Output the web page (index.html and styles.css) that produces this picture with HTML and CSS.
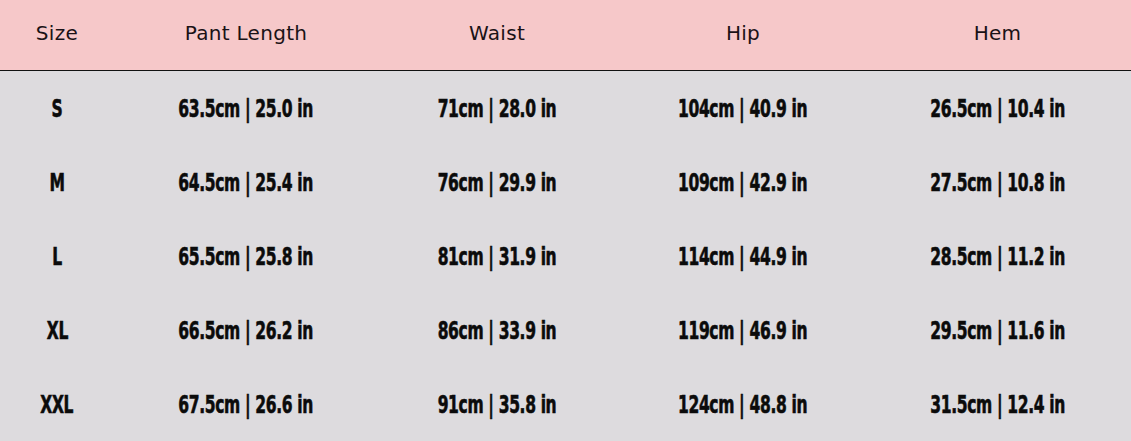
FILE: index.html
```html
<!DOCTYPE html>
<html>
<head>
<meta charset="utf-8">
<link rel="stylesheet" href="styles.css">
</head>
<body>
<div class="chart">
  <div class="row head">
    <div class="cell">Size</div>
    <div class="cell">Pant Length</div>
    <div class="cell">Waist</div>
    <div class="cell">Hip</div>
    <div class="cell">Hem</div>
  </div>
  <div class="body">
    <div class="row">
      <div class="cell"><span>S</span></div>
      <div class="cell"><span>63.5cm | 25.0 in</span></div>
      <div class="cell"><span>71cm | 28.0 in</span></div>
      <div class="cell"><span>104cm | 40.9 in</span></div>
      <div class="cell"><span>26.5cm | 10.4 in</span></div>
    </div>
    <div class="row">
      <div class="cell"><span>M</span></div>
      <div class="cell"><span>64.5cm | 25.4 in</span></div>
      <div class="cell"><span>76cm | 29.9 in</span></div>
      <div class="cell"><span>109cm | 42.9 in</span></div>
      <div class="cell"><span>27.5cm | 10.8 in</span></div>
    </div>
    <div class="row">
      <div class="cell"><span>L</span></div>
      <div class="cell"><span>65.5cm | 25.8 in</span></div>
      <div class="cell"><span>81cm | 31.9 in</span></div>
      <div class="cell"><span>114cm | 44.9 in</span></div>
      <div class="cell"><span>28.5cm | 11.2 in</span></div>
    </div>
    <div class="row">
      <div class="cell"><span>XL</span></div>
      <div class="cell"><span>66.5cm | 26.2 in</span></div>
      <div class="cell"><span>86cm | 33.9 in</span></div>
      <div class="cell"><span>119cm | 46.9 in</span></div>
      <div class="cell"><span>29.5cm | 11.6 in</span></div>
    </div>
    <div class="row">
      <div class="cell"><span>XXL</span></div>
      <div class="cell"><span>67.5cm | 26.6 in</span></div>
      <div class="cell"><span>91cm | 35.8 in</span></div>
      <div class="cell"><span>124cm | 48.8 in</span></div>
      <div class="cell"><span>31.5cm | 12.4 in</span></div>
    </div>
  </div>
</div>
</body>
</html>
```

FILE: styles.css
```css
html, body {
  margin: 0;
  padding: 0;
  background: #dddbde;
}
.chart {
  width: 1131px;
  height: 441px;
  display: flex;
  flex-direction: column;
}
.row {
  display: grid;
  grid-template-columns: 114px 264px 238px 254px 255px;
  align-items: center;
}
.row .cell {
  text-align: center;
  white-space: nowrap;
}
.head {
  height: 70px;
  background: #f6c8c9;
  border-bottom: 1px solid #111;
  font-family: "DejaVu Sans", sans-serif;
  font-size: 20px;
  color: #1a1216;
  letter-spacing: 0.3px;
}
.head .cell {
  padding-bottom: 4px;
}
.body {
  flex: 1;
  display: grid;
  grid-template-rows: repeat(5, 1fr);
}
.body .cell {
  font-family: "DejaVu Sans Condensed", sans-serif;
  font-weight: bold;
  font-size: 25px;
  color: #0b0b0b;
  letter-spacing: -0.5px;
}
.body .cell span {
  display: inline-block;
  transform: scaleX(0.69);
  -webkit-text-stroke: 0.6px #0b0b0b;
}
```
